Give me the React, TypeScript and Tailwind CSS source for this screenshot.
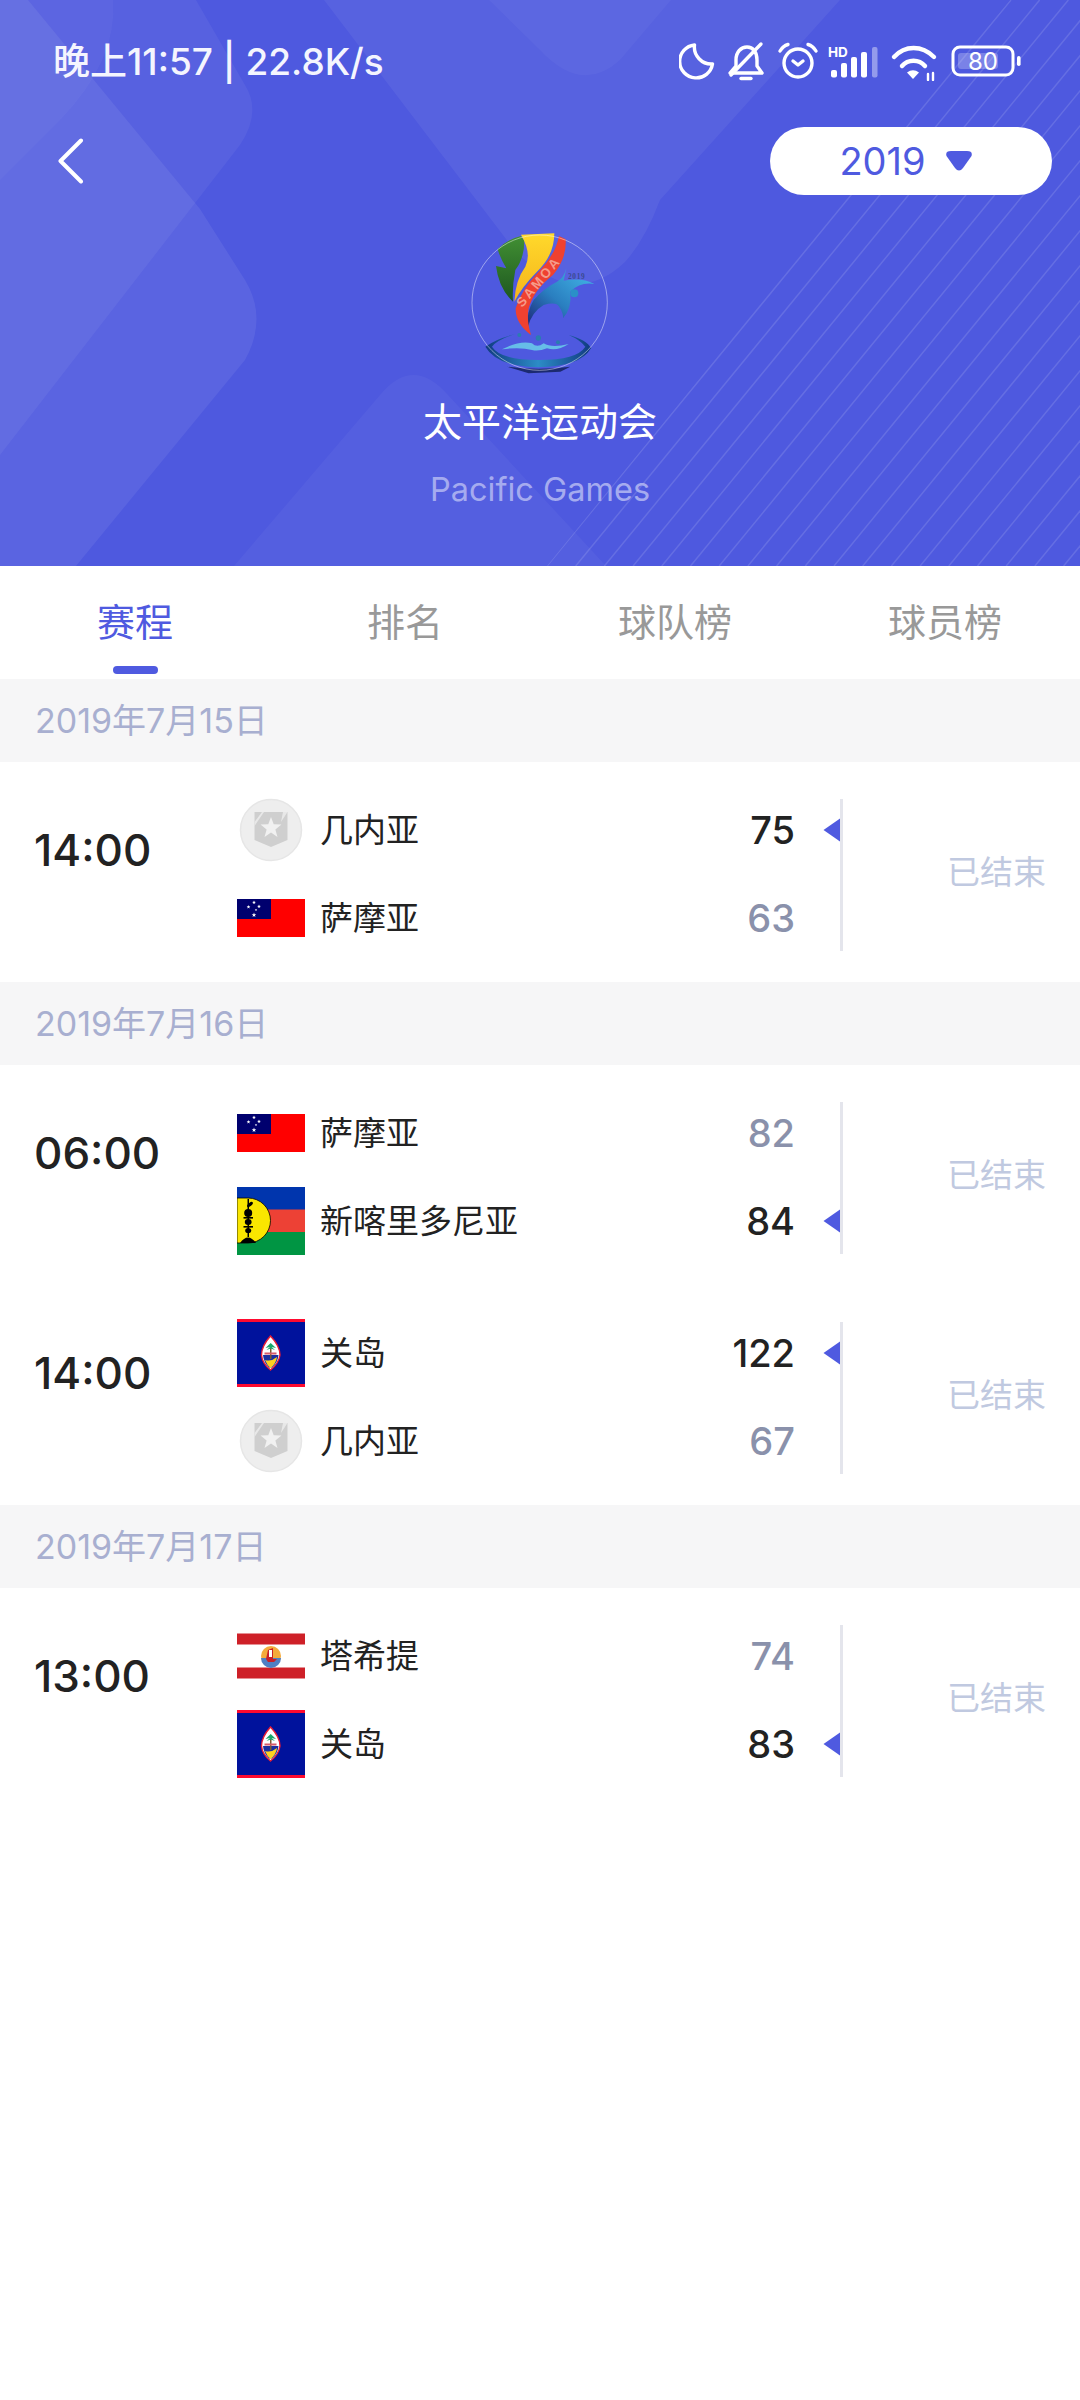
import React from "react";

const Stripes = () => {
  const lines = [];
  for (let i = -4; i < 30; i++) {
    const x0 = 547 + 28.7 * i;
    lines.push(<line key={i} x1={x0} y1={566} x2={x0 + 566 / 1.22} y2={0} />);
  }
  return (
    <g stroke="#ffffff" strokeOpacity="0.13" strokeWidth="1.5" clipPath="url(#stripeClip)">
      {lines}
    </g>
  );
};

const HeaderBg = () => (
  <svg className="absolute inset-0" width="1080" height="566" viewBox="0 0 1080 566">
    <defs>
      <clipPath id="stripeClip">
        <path d="M547 566 L905 125 L1010 0 H1080 V566 Z" />
      </clipPath>
    </defs>
    <path d="M-10 0 H196 L245 85 Q262 112 240 145 L0 455 Z" fill="#ffffff" fillOpacity="0.05" />
    <path d="M28 0 L200 209 L245 280 Q268 318 245 360 L76 566 H-10 V0 Z" fill="#ffffff" fillOpacity="0.07" />
    <path d="M0 0 H113 Q118 60 60 120 L0 180 Z" fill="#ffffff" fillOpacity="0.03" />
    <path d="M324 0 L516 252 Q575 310 625 262 Q645 240 660 200 L840 0 Z" fill="#ffffff" fillOpacity="0.055" />
    <path d="M489 0 L540 50 Q582 95 620 60 L671 0 Z" fill="#ffffff" fillOpacity="0.035" />
    <path d="M234 566 L380 395 Q413 355 448 395 L606 566 Z" fill="#ffffff" fillOpacity="0.04" />
    <Stripes />
  </svg>
);

const StatusIcons = () => (
  <svg width="343" height="42" viewBox="679 39 343 42" fill="none" stroke="#ffffff" strokeWidth="3.4" strokeLinecap="round" strokeLinejoin="round">
    <path d="M694.5 45 a16.5 16.5 0 1 0 18 19 a 17 17 0 0 1 -18 -19z" />
    <path d="M736 66 V60 C736 52 741 47 747 47 C753 47 757 52 757 60 V66 L762 73 H730 Z" />
    <path d="M731 75 L761 44" />
    <path d="M741 78.5 H751" />
    <circle cx="798" cy="63" r="14" />
    <path d="M780 51 Q783 46 788 44.5" />
    <path d="M808 44.5 Q813 46 816 51" />
    <path d="M793 61 l5 4 l5 -4" />
    <text x="828" y="57" fontSize="13.5" fontWeight="700" fill="#ffffff" stroke="none" fontFamily="Inter, sans-serif">HD</text>
    <g stroke="none" fill="#ffffff">
      <rect x="831" y="70" width="6" height="7.5" rx="2" />
      <rect x="841" y="63" width="6" height="14.5" rx="2" />
      <rect x="851" y="57" width="6" height="20.5" rx="2" />
      <rect x="861" y="52" width="6" height="25.5" rx="2" />
      <rect x="872" y="47" width="5.5" height="30.5" rx="2" fillOpacity="0.4" />
    </g>
    <path d="M894 57 C905 45 922 45 934 57" strokeWidth="4.4" />
    <path d="M902 66 C908 59 919 59 925 66" strokeWidth="4.4" />
    <path d="M907 72.5 Q913 68 919 72.5 L913 79 Z" fill="#ffffff" stroke="none" />
    <path d="M928 74 V80 M933 73 V80" strokeWidth="2.4" />
    <rect x="953" y="47" width="60" height="28" rx="7" strokeWidth="3" />
    <rect x="958" y="53" width="40" height="16" rx="3" fill="#ffffff" fillOpacity="0.25" stroke="none" />
    <text x="983" y="70" fontSize="24" textAnchor="middle" fill="#ffffff" stroke="none" fontFamily="Inter, sans-serif">80</text>
    <rect x="1017" y="56" width="3.6" height="10" rx="1.8" fill="#ffffff" stroke="none" />
  </svg>
);

const GamesLogo = () => (
  <svg width="146.67" height="146.67" viewBox="200 90 440 440" className="block">
    <defs>
      <linearGradient id="lgGreen" x1="0" y1="0" x2="0" y2="1">
        <stop offset="0" stopColor="#418f33" />
        <stop offset="1" stopColor="#1d561f" />
      </linearGradient>
      <linearGradient id="lgYellow" x1="0" y1="0" x2="0" y2="1">
        <stop offset="0" stopColor="#ffd92b" />
        <stop offset="1" stopColor="#f5b41c" />
      </linearGradient>
      <linearGradient id="lgBlue" x1="0" y1="1" x2="1" y2="0">
        <stop offset="0" stopColor="#1c2678" />
        <stop offset="0.45" stopColor="#2a7fc0" />
        <stop offset="1" stopColor="#45bbeb" />
      </linearGradient>
      <linearGradient id="lgBowl" x1="0" y1="0" x2="1" y2="0">
        <stop offset="0" stopColor="#103a80" />
        <stop offset="0.5" stopColor="#2c8cc6" />
        <stop offset="1" stopColor="#103a80" />
      </linearGradient>
    </defs>
    <path d="M292 148 Q320 118 362 108 L372 122 Q372 175 345 210 Q335 260 338 305 Q295 265 287 198 L318 205 Q300 175 292 148Z" fill="url(#lgGreen)" />
    <path d="M362 104 L462 100 Q462 165 410 215 Q365 260 342 305 Q345 240 375 200 Q395 160 362 104Z" fill="url(#lgYellow)" />
    <path d="M498 205 Q490 235 470 245 Q430 265 400 300 Q378 335 382 382 Q395 335 430 315 Q465 305 475 318 Q490 340 488 355 Q515 325 510 275 Q540 245 582 252 Q545 232 490 242 Z" fill="url(#lgBlue)" />
    <path d="M476 108 L496 118 Q500 175 458 225 Q400 270 385 325 Q378 360 392 405 Q345 370 346 325 Q365 265 415 215 Q465 165 476 108Z" fill="#ef4130" />
    <text x="366" y="324" fontSize="40" fontWeight="700" letterSpacing="7" fill="#f8b9a8" fillOpacity="0.75" transform="rotate(-50 366 324)" fontFamily="Liberation Sans, sans-serif">SAMOA</text>
    <circle cx="522" cy="280" r="12" fill="#2a90c8" />
    <text x="503" y="236" fontSize="22" fontWeight="700" fill="#3a4a90" letterSpacing="2" fontFamily="Liberation Serif, serif">2019</text>
    <path d="M255 440 Q290 415 345 402 Q290 420 275 440 Q300 480 415 480 Q530 480 555 440 Q540 420 505 405 Q560 420 572 445 Q540 500 415 502 Q290 500 255 440Z" fill="url(#lgBowl)" />
    <path d="M305 448 Q360 420 395 430 Q410 445 430 430 Q455 445 505 432 Q470 455 440 445 Q415 455 395 450 Q360 440 305 448Z" fill="#66bde8" />
    <circle cx="357" cy="405" r="6" fill="#2a7db0" />
    <circle cx="414" cy="414" r="8" fill="#2a7db0" />
    <circle cx="473" cy="427" r="6" fill="#2a7db0" />
    <path d="M320 500 Q415 512 510 500 L480 515 L385 520 Z" fill="#1c2a70" />
    <circle cx="418" cy="308" r="203" fill="none" stroke="#ffffff" strokeOpacity="0.45" strokeWidth="3" />
  </svg>
);

const Star = ({ cx, cy, r, fill }: { cx: number; cy: number; r: number; fill: string }) => {
  const pts = [];
  for (let i = 0; i < 10; i++) {
    const rad = i % 2 === 0 ? r : r * 0.42;
    const a = -Math.PI / 2 + (i * Math.PI) / 5;
    pts.push(`${cx + rad * Math.cos(a)},${cy + rad * Math.sin(a)}`);
  }
  return <polygon points={pts.join(" ")} fill={fill} />;
};

const GuineaLogo = () => (
  <svg width="68" height="68" viewBox="0 0 68 68" className="block">
    <circle cx="34" cy="34" r="30.5" fill="#eeeeee" stroke="#e6e6e6" strokeWidth="1.5" />
    <path d="M17.5 16 H50.5 V44 L34 51 L17.5 44 Z" fill="#cfcfcf" />
    <path d="M17.5 26 L25 16 H27 L17.5 30 Z M46 16 L50.5 16 L44 26 Z" fill="#e8e8e8" />
    <Star cx={34} cy={32} r={11} fill="#f1f1f1" />
  </svg>
);

const SamoaFlag = () => (
  <svg width="68" height="68" viewBox="0 0 68 68" className="block">
    <rect x="0" y="15" width="68" height="38" fill="#ff0000" />
    <rect x="0" y="15" width="34" height="20" fill="#00006e" />
    <Star cx={17} cy={18.5} r={2} fill="#ffffff" />
    <Star cx={11.5} cy={23} r={2} fill="#ffffff" />
    <Star cx={22} cy={22.5} r={2} fill="#ffffff" />
    <Star cx={19} cy={26} r={1.3} fill="#ffffff" />
    <Star cx={17} cy={31} r={2.4} fill="#ffffff" />
  </svg>
);

const NewCaledoniaFlag = () => (
  <svg width="68" height="68" viewBox="0 0 68 68" className="block">
    <rect width="68" height="23" fill="#0035ad" />
    <rect y="22.5" width="68" height="23" fill="#ed4135" />
    <rect y="45" width="68" height="23" fill="#009543" />
    <path d="M11 11 A22.5 22.5 0 0 1 11 56 H0 V11 Z" fill="#fae600" stroke="#000000" strokeWidth="0.8" />
    <g fill="#000000">
      <rect x="10.5" y="12" width="1.5" height="38" />
      <ellipse cx="13" cy="17.5" rx="3.5" ry="1.6" transform="rotate(-40 13 17.5)" />
      <circle cx="11.2" cy="26" r="4" />
      <rect x="6.5" y="30" width="9.5" height="1.6" />
      <ellipse cx="11.2" cy="35" rx="3.4" ry="3" />
      <rect x="6.5" y="39" width="9.5" height="1.6" />
      <ellipse cx="11.2" cy="43.5" rx="3" ry="2.6" />
      <path d="M3 56 Q11 45 19 56 Z" />
    </g>
  </svg>
);

const GuamFlag = () => (
  <svg width="68" height="68" viewBox="0 0 68 68" className="block">
    <rect width="68" height="68" fill="#ff0a2f" />
    <rect y="3" width="68" height="62" fill="#00129c" />
    <path d="M33.5 17 Q43 27 43 36 Q42 44 33.5 51 Q25 44 24.5 36 Q24.5 27 33.5 17Z" fill="#ffffff" stroke="#e81c34" strokeWidth="1.4" />
    <path d="M26 36 H41.5 Q41 43 35 48.5 H32 Q26.5 43 26 36Z" fill="#1a2fa0" />
    <path d="M28 41 Q34 43 40 38 Q39 45 33.5 49 Q30 46 28 41Z" fill="#ffd21f" />
    <path d="M33 26 H34.5 V40 H33 Z" fill="#7a5a30" />
    <path d="M33.7 24 L28.5 29 L33 28 L29.5 31 L33.7 29.5 L38 31 L34.5 28 L39 29 Z" fill="#1aa86b" />
    <rect x="27.5" y="33.5" width="12" height="2" fill="#d65a6a" />
  </svg>
);

const TahitiFlag = () => (
  <svg width="68" height="68" viewBox="0 0 68 68" className="block">
    <rect y="11.5" width="68" height="45" fill="#ffffff" />
    <rect y="11.5" width="68" height="11" fill="#ce2028" />
    <rect y="45.5" width="68" height="11" fill="#ce2028" />
    <circle cx="34" cy="34" r="10" fill="#f4ab3c" />
    <path d="M24 36 H44 A10 10 0 0 1 24 36 Z" fill="#4f7fc4" />
    <path d="M29 37 L31 28 L36 26 V37 H40 L37 40 H31 Z" fill="#c8202a" />
    <rect x="32" y="28" width="3" height="7" fill="#ffffff" />
  </svg>
);

type TeamKey = "guinea" | "samoa" | "nc" | "guam" | "tahiti";

const teamInfo: Record<TeamKey, { name: string; logo: React.ReactNode }> = {
  guinea: { name: "几内亚", logo: <GuineaLogo /> },
  samoa: { name: "萨摩亚", logo: <SamoaFlag /> },
  nc: { name: "新喀里多尼亚", logo: <NewCaledoniaFlag /> },
  guam: { name: "关岛", logo: <GuamFlag /> },
  tahiti: { name: "塔希提", logo: <TahitiFlag /> },
};

const TeamRow = ({ team, score, win }: { team: TeamKey; score: number; win: boolean }) => (
  <div className="flex h-[68px] items-center">
    <div className="h-[68px] w-[68px] shrink-0">{teamInfo[team].logo}</div>
    <div className="ml-[15px] flex-1 text-[33px] leading-[44px] text-[#222222]">{teamInfo[team].name}</div>
    <div className={win ? "text-[38px] leading-[44px] font-medium text-[#222222]" : "text-[38px] leading-[44px] font-medium text-[#8a91ab]"}>
      {score}
    </div>
    <div className="ml-[28px] flex w-[17px] items-center">
      {win ? (
        <svg width="17" height="24" viewBox="0 0 17 24" className="block">
          <path d="M17 0.5 V23.5 L0.5 12 Z" fill="#4f5ae0" />
        </svg>
      ) : null}
    </div>
  </div>
);

const Match = ({ time, a, b }: { time: string; a: [TeamKey, number]; b: [TeamKey, number] }) => (
  <div className="flex h-[220px] items-start pl-[34px]">
    <div className="mt-[58px] w-[203px] text-[44px] leading-[60px] font-medium text-[#222222]">{time}</div>
    <div className="mt-[34px] flex w-[603px] flex-col gap-[20px]">
      <TeamRow team={a[0]} score={a[1]} win={a[1] > b[1]} />
      <TeamRow team={b[0]} score={b[1]} win={b[1] > a[1]} />
    </div>
    <div className="mt-[37px] h-[152px] w-[3px] bg-[#e4e5ec]" />
    <div className="mt-[85px] flex-1 pr-[34px] text-right text-[33px] leading-[50px] text-[#c0c9e0]">已结束</div>
  </div>
);

const DateBar = ({ children }: { children: string }) => (
  <div className="flex h-[83px] items-center bg-[#f6f6f7] pl-[35px] text-[34px] text-[#a8afd0]">{children}</div>
);

const tabs = ["赛程", "排名", "球队榜", "球员榜"];

export default function App() {
  return (
    <div className="min-h-[2400px] w-[1080px] bg-white font-[Inter,'Noto_Sans_CJK_SC',sans-serif]">
      <header className="relative h-[566px] overflow-hidden bg-[#4e59df]">
        <HeaderBg />
        <div className="relative flex flex-col">
          <div className="flex items-start justify-between pt-[39px] pr-[58px] pl-[53px]">
            <div className="pt-[2px] text-[37px] leading-[42px] font-medium whitespace-nowrap text-[#f4f5fe]">晚上11:57 | 22.8K/s</div>
            <StatusIcons />
          </div>
          <div className="mt-[44px] flex h-[68px] items-center justify-between pr-[28px] pl-[58px]">
            <svg width="26" height="46" viewBox="0 0 26 46" fill="none" stroke="#ffffff" strokeWidth="4" strokeLinecap="round" strokeLinejoin="round">
              <path d="M23 2.5 L2.5 23 L23 43.5" />
            </svg>
            <div className="flex h-[68px] w-[282px] items-center justify-center gap-[19px] rounded-full bg-white pr-[10px]">
              <span className="text-[38px] leading-[50px] text-[#4f5ae0]">2019</span>
              <svg width="28" height="22" viewBox="0 0 28 22">
                <path d="M6 1 H22 Q28 1 26.5 6 L18 18 Q14 23 10 18 L1.5 6 Q0 1 6 1Z" fill="#4f5ae0" />
              </svg>
            </div>
          </div>
          <div className="mt-[35px] flex justify-center">
            <GamesLogo />
          </div>
          <div className="mt-[20px] text-center text-[39px] leading-[50px] text-white">太平洋运动会</div>
          <div className="mt-[20px] text-center text-[32.5px] leading-[46px] text-[#a5abef]">Pacific Games</div>
        </div>
      </header>

      <nav className="flex h-[113px] bg-white">
        {tabs.map((t, i) => (
          <div key={t} className="flex flex-1 flex-col items-center pt-[31px]">
            <div className={i === 0 ? "text-[38px] leading-[50px] text-[#4f5ae0]" : "text-[38px] leading-[50px] text-[#999999]"}>{t}</div>
            {i === 0 ? <div className="mt-[19px] h-[8px] w-[45px] rounded-full bg-[#4f5ae0]" /> : null}
          </div>
        ))}
      </nav>

      <DateBar>2019年7月15日</DateBar>
      <Match time="14:00" a={["guinea", 75]} b={["samoa", 63]} />
      <DateBar>2019年7月16日</DateBar>
      <Match time="06:00" a={["samoa", 82]} b={["nc", 84]} />
      <Match time="14:00" a={["guam", 122]} b={["guinea", 67]} />
      <DateBar>2019年7月17日</DateBar>
      <Match time="13:00" a={["tahiti", 74]} b={["guam", 83]} />
    </div>
  );
}
